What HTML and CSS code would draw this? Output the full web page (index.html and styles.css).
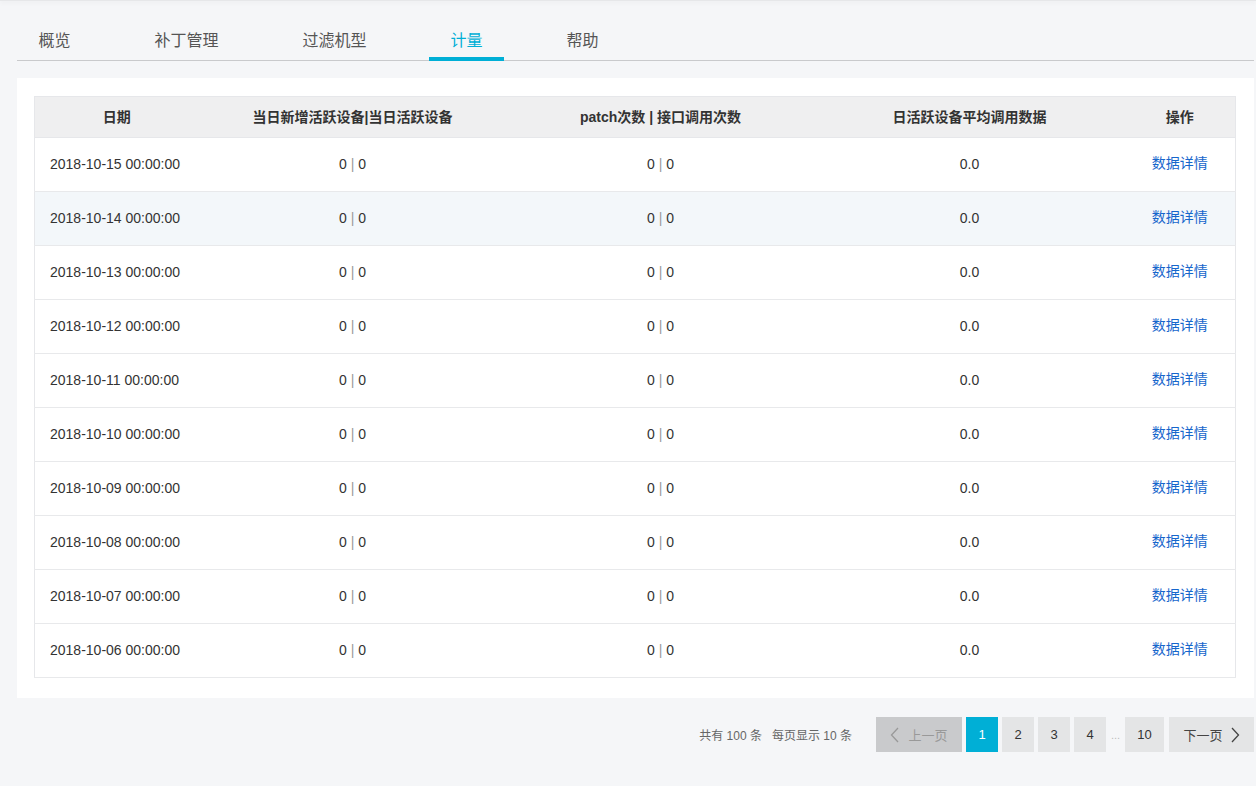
FILE: index.html
```html
<!DOCTYPE html>
<html lang="zh-CN">
<head>
<meta charset="utf-8">
<title>计量</title>
<link rel="stylesheet" href="styles.css">
</head>
<body>
<div class="topshadow"></div>
<div class="page">
  <nav class="tabs">
    <a class="tab">概览</a>
    <a class="tab">补丁管理</a>
    <a class="tab">过滤机型</a>
    <a class="tab active">计量</a>
    <a class="tab">帮助</a>
  </nav>
  <section class="card">
    <table class="grid">
      <colgroup>
        <col class="c1"><col class="c2"><col class="c3"><col class="c4"><col class="c5">
      </colgroup>
      <thead>
        <tr>
          <th>日期</th>
          <th>当日新增活跃设备|当日活跃设备</th>
          <th>patch次数 | 接口调用次数</th>
          <th>日活跃设备平均调用数据</th>
          <th>操作</th>
        </tr>
      </thead>
      <tbody>
        <tr><td class="date">2018-10-15 00:00:00</td><td>0 <span class="sep">|</span> 0</td><td>0 <span class="sep">|</span> 0</td><td>0.0</td><td><a class="link">数据详情</a></td></tr>
        <tr class="hover"><td class="date">2018-10-14 00:00:00</td><td>0 <span class="sep">|</span> 0</td><td>0 <span class="sep">|</span> 0</td><td>0.0</td><td><a class="link">数据详情</a></td></tr>
        <tr><td class="date">2018-10-13 00:00:00</td><td>0 <span class="sep">|</span> 0</td><td>0 <span class="sep">|</span> 0</td><td>0.0</td><td><a class="link">数据详情</a></td></tr>
        <tr><td class="date">2018-10-12 00:00:00</td><td>0 <span class="sep">|</span> 0</td><td>0 <span class="sep">|</span> 0</td><td>0.0</td><td><a class="link">数据详情</a></td></tr>
        <tr><td class="date">2018-10-11 00:00:00</td><td>0 <span class="sep">|</span> 0</td><td>0 <span class="sep">|</span> 0</td><td>0.0</td><td><a class="link">数据详情</a></td></tr>
        <tr><td class="date">2018-10-10 00:00:00</td><td>0 <span class="sep">|</span> 0</td><td>0 <span class="sep">|</span> 0</td><td>0.0</td><td><a class="link">数据详情</a></td></tr>
        <tr><td class="date">2018-10-09 00:00:00</td><td>0 <span class="sep">|</span> 0</td><td>0 <span class="sep">|</span> 0</td><td>0.0</td><td><a class="link">数据详情</a></td></tr>
        <tr><td class="date">2018-10-08 00:00:00</td><td>0 <span class="sep">|</span> 0</td><td>0 <span class="sep">|</span> 0</td><td>0.0</td><td><a class="link">数据详情</a></td></tr>
        <tr><td class="date">2018-10-07 00:00:00</td><td>0 <span class="sep">|</span> 0</td><td>0 <span class="sep">|</span> 0</td><td>0.0</td><td><a class="link">数据详情</a></td></tr>
        <tr><td class="date">2018-10-06 00:00:00</td><td>0 <span class="sep">|</span> 0</td><td>0 <span class="sep">|</span> 0</td><td>0.0</td><td><a class="link">数据详情</a></td></tr>
      </tbody>
    </table>
  </section>
  <div class="pager">
    <span class="total">共有 100 条&nbsp;&nbsp;&nbsp;每页显示 10 条</span>
    <a class="pbtn prev disabled"><svg class="chev" width="9" height="16" viewBox="0 0 9 16"><path d="M8 1 L1.5 8 L8 15" fill="none" stroke="currentColor" stroke-width="1.3"/></svg>上一页</a>
    <a class="pbtn num current">1</a>
    <a class="pbtn num">2</a>
    <a class="pbtn num">3</a>
    <a class="pbtn num">4</a>
    <span class="dots">...</span>
    <a class="pbtn num wide">10</a>
    <a class="pbtn next">下一页<svg class="chev" width="9" height="16" viewBox="0 0 9 16"><path d="M1 1 L7.5 8 L1 15" fill="none" stroke="currentColor" stroke-width="1.3"/></svg></a>
  </div>
</div>
</body>
</html>
```

FILE: styles.css
```css
html, body {
  margin: 0;
  padding: 0;
  background: #f5f6f8;
  font-family: "Liberation Sans", "Noto Sans CJK SC", sans-serif;
  color: #333;
}

.topshadow {
  height: 1px;
  background: #e6e7e9;
  box-shadow: 0 1px 5px rgba(0, 0, 0, 0.12);
}

.page {
  padding: 19px 2px 0 17px;
}

.tabs {
  display: flex;
  gap: 41px;
  border-bottom: 1px solid #c9cacc;
  height: 40px;
}

.tab {
  display: block;
  box-sizing: border-box;
  height: 41px;
  padding: 0 21.5px;
  line-height: 42px;
  font-size: 16px;
  color: #555;
  border-bottom: 4px solid transparent;
  cursor: pointer;
}

.tab.active {
  color: #00afd6;
  border-bottom-color: #00afd6;
}

.card {
  margin-top: 17px;
  background: #fff;
  padding: 18px 18px 20px 17px;
}

.grid {
  width: 100%;
  border-collapse: collapse;
  table-layout: fixed;
  border: 1px solid #e6e7ea;
  font-size: 14px;
}

.c1 { width: 164px; }
.c2 { width: 308px; }
.c3 { width: 308px; }
.c4 { width: 310px; }

.grid th {
  height: 41px;
  box-sizing: border-box;
  background: #efeff0;
  font-weight: bold;
  color: #333;
  text-align: center;
  padding: 0 0 2px;
  border-bottom: 1px solid #e6e7ea;
}

.grid td {
  height: 54px;
  box-sizing: border-box;
  padding: 0 0 2px;
  text-align: center;
  color: #333;
  border-bottom: 1px solid #e8e9eb;
}

.grid td.date {
  text-align: left;
  padding-left: 15px;
}

.grid tr.hover td {
  background: #f3f7fa;
}

.sep {
  color: #999;
}

.link {
  color: #1666cc;
  cursor: pointer;
  display: inline-block;
  margin-top: -1px;
  vertical-align: top;
  line-height: 20px;
}

.pager {
  display: flex;
  justify-content: flex-end;
  align-items: center;
  gap: 4px;
  margin-top: 19px;
  font-size: 13px;
}

.total {
  color: #666;
  font-size: 12px;
  margin-right: 20px;
}

.pbtn {
  display: flex;
  align-items: center;
  justify-content: center;
  height: 35px;
  background: #e4e5e6;
  color: #333;
  cursor: pointer;
}

.pbtn.num {
  width: 32px;
}

.pbtn.wide {
  width: 39px;
}

.pbtn.current {
  background: #00afd6;
  color: #fff;
}

.pbtn.prev {
  width: 86px;
  gap: 9px;
  background: #c9cacc;
  color: #999;
}

.pbtn.next {
  width: 85px;
  gap: 8px;
  color: #444;
  margin-left: 1px;
}

.chev {
  display: block;
}

.dots {
  color: #bbb;
  width: 11px;
  text-align: center;
  font-size: 11px;
}
```
